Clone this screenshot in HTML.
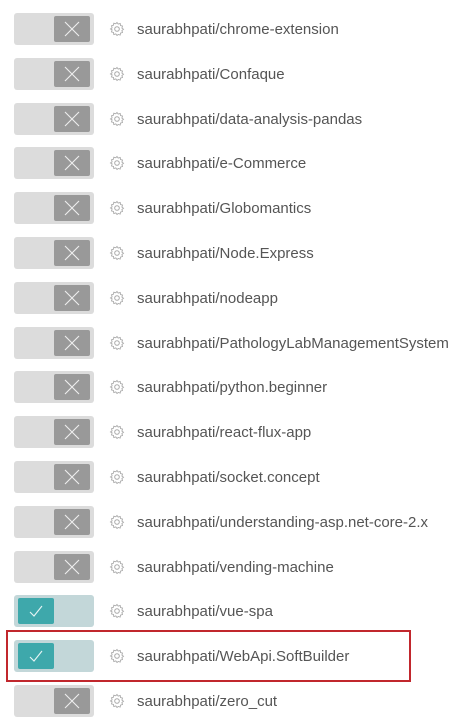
<!DOCTYPE html><html><head><style>
body{margin:0;width:474px;height:720px;background:#fff;font-family:"Liberation Sans",sans-serif;position:relative;overflow:hidden}
.r{position:absolute;left:0;height:32px;width:474px}
.t{position:absolute;left:14px;top:0;width:80px;height:32px;background:#dcdcdc;border-radius:3px}
.k{position:absolute;left:40px;top:3px;width:36px;height:26px;background:#999;border-radius:2px}
.on .t{background:#c3d7d9}.on .k{left:4px;background:#3ea8ab}
.k svg{position:absolute;left:8px;top:3px}
.g{position:absolute;left:109px;top:8px}
.l{position:absolute;left:137px;top:8px;font-size:15px;color:#555;white-space:nowrap}
.box{position:absolute;left:6px;top:630px;width:401px;height:48px;border:2px solid #c1272d}
</style></head><body>
<div class="box"></div>
<script>
const n=["chrome-extension","Confaque","data-analysis-pandas","e-Commerce","Globomantics","Node.Express","nodeapp","PathologyLabManagementSystem","python.beginner","react-flux-app","socket.concept","understanding-asp.net-core-2.x","vending-machine","vue-spa","WebApi.SoftBuilder","zero_cut"];
let h="";n.forEach((s,i)=>{const on=i==13||i==14;const y=Math.round(13+i*44.8);
const ic=on?'<svg width="20" height="20"><path d="M4 11 L8 15 L16 5" stroke="#e6f4f4" stroke-width="1.1" fill="none"/></svg>':'<svg width="20" height="20"><path d="M3 3 L17 17 M17 3 L3 17" stroke="#eee" stroke-width="1.1" fill="none"/></svg>';
h+=`<div class="r${on?' on':''}" style="top:${y}px"><div class="t"><div class="k">${ic}</div></div><svg class="g" width="16" height="16" viewBox="0 0 16 16"><circle cx="8" cy="8" r="2.3" fill="none" stroke="#aaa"/><path d="M8 1.5l1.2 1.6 2-.6.3 2 2 .6-.6 2 1.6 1.2-1.6 1.2.6 2-2 .6-.3 2-2-.6L8 14.5l-1.2-1.6-2 .6-.3-2-2-.6.6-2L1.5 8l1.6-1.2-.6-2 2-.6.3-2 2 .6z" fill="none" stroke="#aaa" stroke-width=".9"/></svg><div class="l">saurabhpati/${s}</div></div>`});
document.write(h);
</script>
</body></html>
